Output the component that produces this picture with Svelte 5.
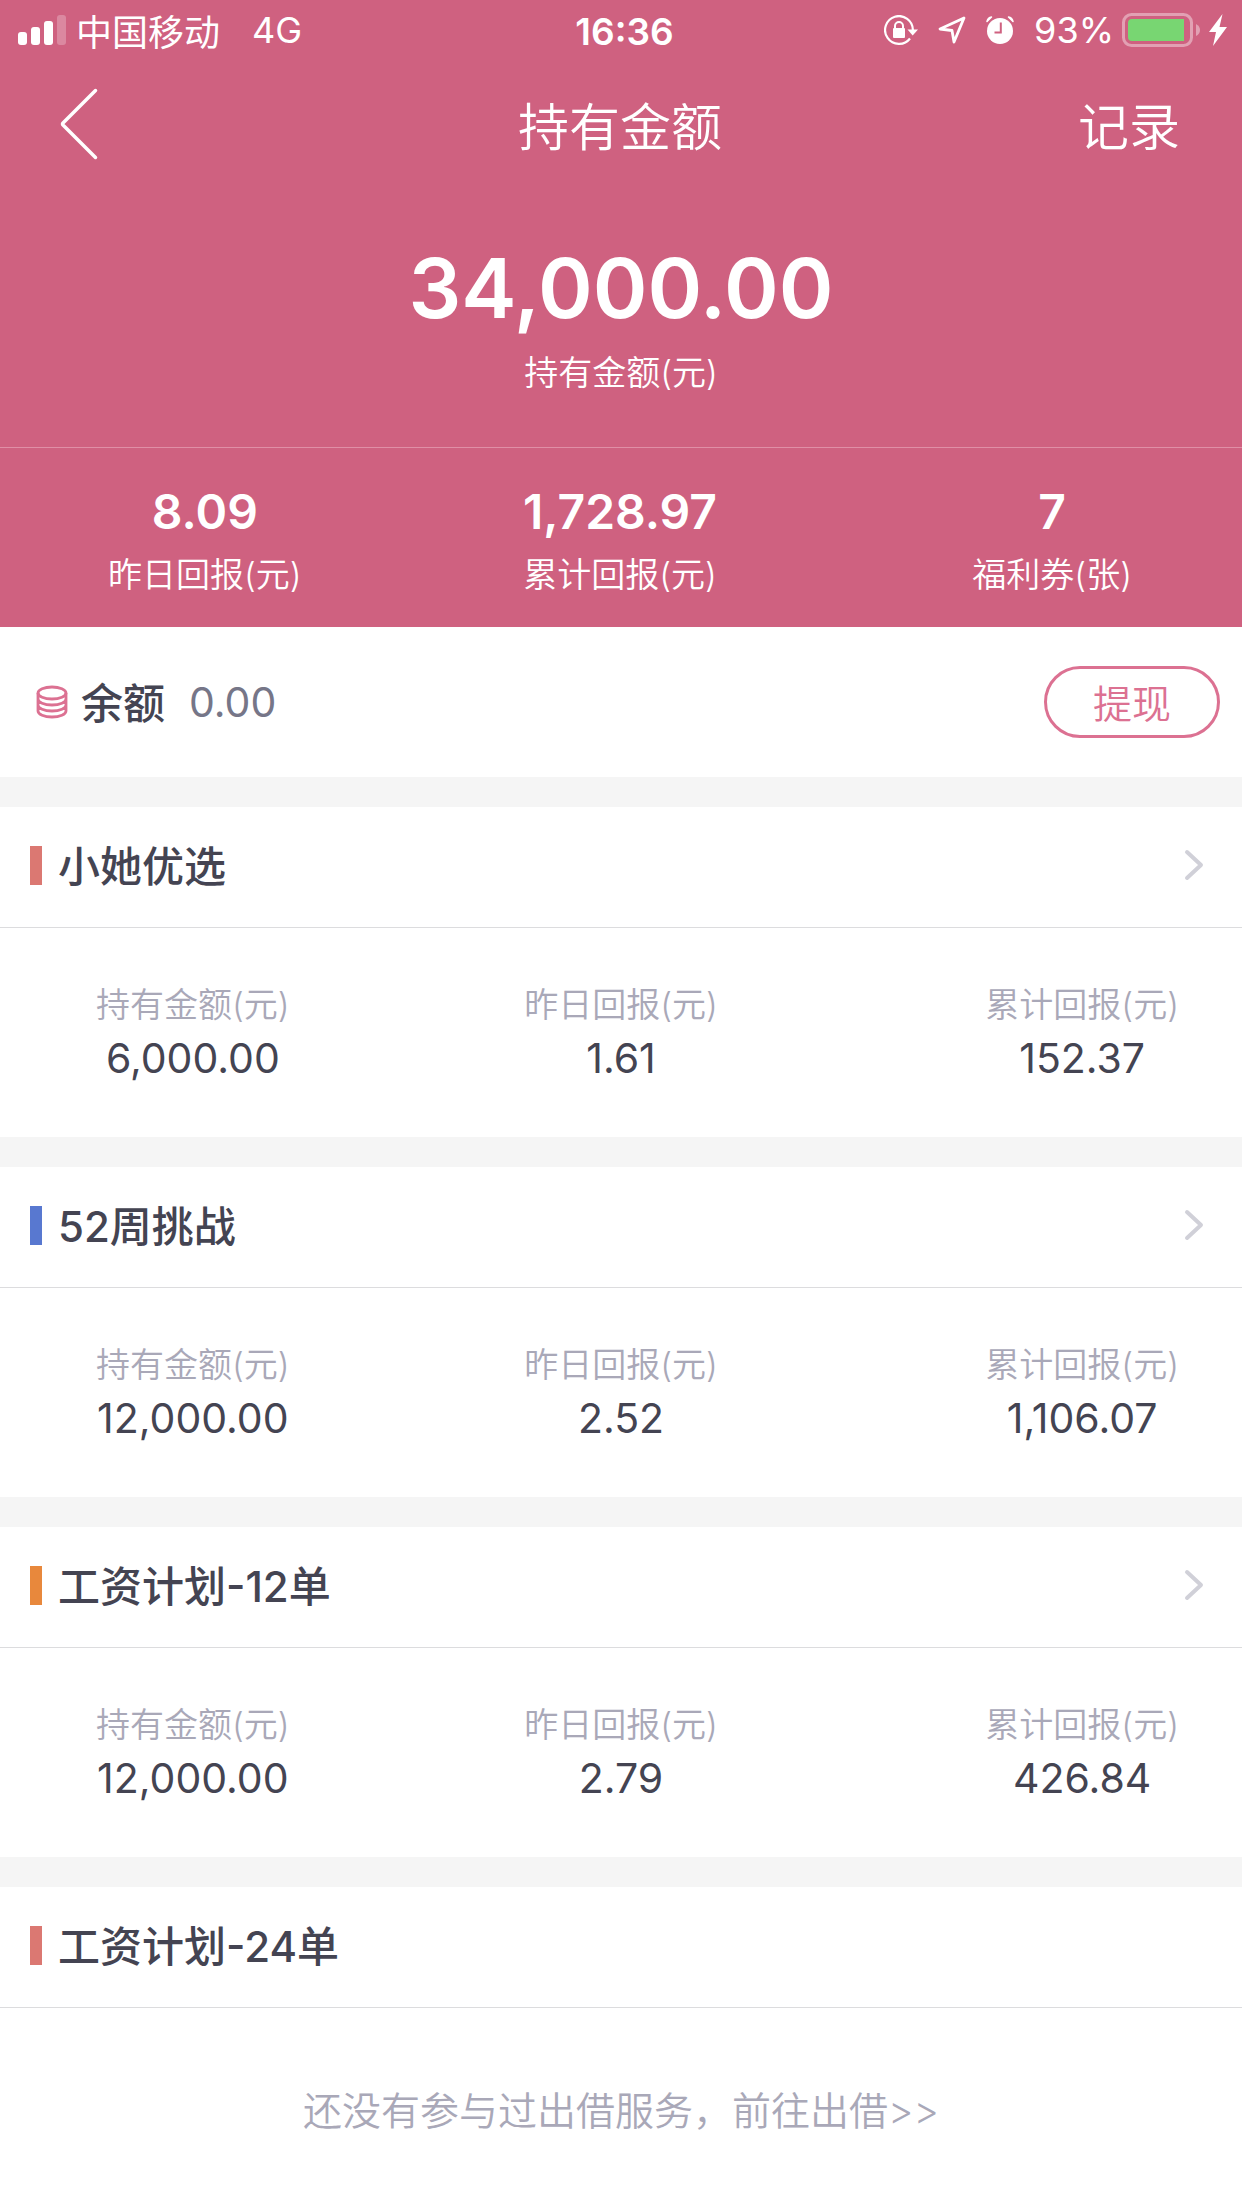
<script lang="ts">
	type Stat = { label: string; value: string };
	type Product = { name: string; color: string; stats: Stat[] };

	const summary: Stat[] = [
		{ label: '昨日回报(元)', value: '8.09' },
		{ label: '累计回报(元)', value: '1,728.97' },
		{ label: '福利券(张)', value: '7' }
	];

	function product(name: string, color: string, values: string[] = []): Product {
		const labels = ['持有金额(元)', '昨日回报(元)', '累计回报(元)'];
		return { name, color, stats: values.map((value, i) => ({ label: labels[i], value })) };
	}

	const products = [
		product('小她优选', 'red', ['6,000.00', '1.61', '152.37']),
		product('52周挑战', 'blue', ['12,000.00', '2.52', '1,106.07']),
		product('工资计划-12单', 'orange', ['12,000.00', '2.79', '426.84']),
		product('工资计划-24单', 'red')
	];
</script>

<header class="hero">
	<div class="status">
		<div class="status-side">
			<svg class="signal" width="48" height="30" viewBox="0 0 48 30" fill="#fff" aria-hidden="true">
				<rect x="0" y="17" width="9" height="13" rx="3" />
				<rect x="13" y="12" width="9" height="18" rx="3" />
				<rect x="26" y="6" width="9" height="24" rx="3" />
				<rect x="39" y="0" width="9" height="30" rx="3" opacity="0.25" />
			</svg>
			<span>中国移动</span>
			<span class="network">4G</span>
		</div>
		<span class="time">16:36</span>
		<div class="status-side right">
			<svg class="lock" width="34" height="30" viewBox="0 0 34 30" fill="none" aria-hidden="true">
				<path d="M26 23.5A13.900 13.900 0 1 1 28.900 15" stroke="#fff" stroke-width="2.200" />
				<path d="M23.500 14.500H34L28.700 20.500Z" fill="#fff" />
				<path d="M11 14V11a4 4 0 0 1 8 0V14" stroke="#fff" stroke-width="2" />
				<rect x="9" y="13" width="12" height="10" rx="1" fill="#fff" />
			</svg>
			<svg class="location" width="28" height="28" viewBox="0 0 28 28" fill="none" aria-hidden="true">
				<path d="M26 2L2 13L14 14.500L16 26Z" stroke="#fff" stroke-width="2.800" stroke-linejoin="round" />
			</svg>
			<svg class="alarm" width="28" height="28" viewBox="0 0 28 28" aria-hidden="true">
				<circle cx="14" cy="15" r="13" fill="#fff" />
				<path d="M1 5.500Q2 1.500 5.500 1Z M27 5.500Q26 1.500 22.500 1Z" fill="#fff" stroke="#fff" stroke-width="1.500" stroke-linejoin="round" />
				<path d="M14.800 6.500V16.500H8.500" fill="none" stroke="#cf6180" stroke-width="2" />
			</svg>
			<span>93%</span>
			<svg class="battery" width="78" height="34" viewBox="0 0 78 34" aria-hidden="true">
				<rect x="1.500" y="1.500" width="68" height="31" rx="8" fill="none" stroke="#fff" stroke-opacity="0.4" stroke-width="3" />
				<path d="M10 6H62V28H10A4 4 0 0 1 6 24V10A4 4 0 0 1 10 6Z" fill="#78d672" />
				<path d="M74 11Q78 13 78 17T74 23Z" fill="#fff" fill-opacity="0.4" />
			</svg>
			<svg class="bolt" width="18" height="32" viewBox="0 0 18 32" aria-hidden="true">
				<path d="M13.500 0L0 18H7L4 32L18 13H10.500Z" fill="#fff" />
			</svg>
		</div>
	</div>

	<nav class="nav">
		<button class="back" aria-label="返回">
			<svg width="38" height="72" viewBox="0 0 38 72" fill="none" aria-hidden="true">
				<path d="M35.500 2.500L3 35Q2 36 3 37L35.500 69.500" stroke="#fff" stroke-width="3.500" stroke-linecap="round" />
			</svg>
		</button>
		<h1>持有金额</h1>
		<a class="history" href="#history">记录</a>
	</nav>

	<div class="total">
		<strong>34,000.00</strong>
		<span>持有金额(元)</span>
	</div>

	<dl class="summary">
		{#each summary as stat}
			<div class="stat">
				<dt>{stat.label}</dt>
				<dd>{stat.value}</dd>
			</div>
		{/each}
	</dl>
</header>

<main>
	<section class="balance">
		<svg width="32" height="34" viewBox="0 0 32 34" fill="none" stroke="#dc7192" stroke-width="2.800" aria-hidden="true">
			<ellipse cx="16" cy="8" rx="14" ry="6" />
			<path d="M2 8V26A14 6 0 0 0 30 26V8M2 14A14 6 0 0 0 30 14M2 20A14 6 0 0 0 30 20" />
		</svg>
		<h2>余额</h2>
		<span class="amount">0.00</span>
		<button class="withdraw">提现</button>
	</section>

	{#each products as item}
		<section class="product">
			<a class="heading" href="#product">
				<span class="mark {item.color}"></span>
				<h2>{item.name}</h2>
				{#if item.stats.length}
					<svg class="arrow" width="20" height="32" viewBox="0 0 20 32" fill="none" aria-hidden="true">
						<path d="M3 3L17 16L3 29" stroke="#d0d0d8" stroke-width="4" stroke-linecap="round" stroke-linejoin="round" />
					</svg>
				{/if}
			</a>
			{#if item.stats.length}
				<dl class="details">
					{#each item.stats as stat}
						<div class="stat">
							<dt>{stat.label}</dt>
							<dd>{stat.value}</dd>
						</div>
					{/each}
				</dl>
			{:else}
				<a class="empty" href="#lend">还没有参与过出借服务，前往出借&gt;&gt;</a>
			{/if}
		</section>
	{/each}
</main>

<style>
	:global(body) {
		margin: 0;
		background: #fff;
		color: #444452;
		font-family: Inter, 'Noto Sans CJK SC', sans-serif;
	}

	h1,
	h2,
	dl,
	dd {
		margin: 0;
	}

	a {
		color: inherit;
		text-decoration: none;
	}

	button {
		padding: 0;
		background: none;
		border: none;
		font-family: inherit;
		cursor: pointer;
	}

	svg {
		flex: none;
		display: block;
	}

	.hero {
		background: #cf6180;
		color: #fff;
	}

	.status {
		display: grid;
		grid-template-columns: 1fr auto 1fr;
		align-items: center;
		height: 60px;
		padding: 0 15px 0 18px;
		font-size: 36px;
		font-weight: 400;
	}

	.status-side {
		display: flex;
		align-items: center;
	}

	.right {
		justify-content: flex-end;
	}

	.signal {
		margin-right: 10px;
	}

	.network {
		margin-left: 32px;
	}

	.time {
		padding: 2px 0 0 4px;
		font-size: 37px;
		font-weight: 600;
	}

	.lock,
	.location,
	.alarm {
		margin-right: 20px;
	}

	.battery {
		margin: 0 9px 0 8px;
	}

	.nav {
		display: grid;
		grid-template-columns: 1fr auto 1fr;
		align-items: center;
		height: 128px;
		padding: 0 62px 4px 60px;
		font-weight: 350;
	}

	.back {
		justify-self: start;
	}

	h1 {
		font-size: 51px;
		font-weight: 350;
	}

	.history {
		justify-self: end;
		font-size: 51px;
	}

	.total {
		display: flex;
		flex-direction: column;
		align-items: center;
		height: 255px;
		border-bottom: 1px solid #e08fa6;
	}

	.total strong {
		margin-top: 40px;
		font-size: 83px;
		font-weight: 600;
		line-height: 112px;
	}

	.total span {
		margin-top: 6px;
		font-size: 34px;
		font-weight: 350;
		line-height: 46px;
	}

	.summary,
	.details {
		display: grid;
		grid-template-columns: repeat(3, 1fr);
	}

	.stat {
		display: flex;
		flex-direction: column;
		align-items: center;
		justify-self: center;
	}

	.stat:first-child {
		justify-self: start;
	}

	.stat:last-child {
		justify-self: end;
	}

	dt {
		font-size: 34px;
		font-weight: 350;
		line-height: 46px;
	}

	.summary {
		height: 179px;
		padding: 0 110px 0 108px;
	}

	.summary .stat {
		flex-direction: column-reverse;
		justify-content: flex-end;
	}

	.summary dd {
		margin: 32px 0 8px;
		font-size: 48px;
		font-weight: 600;
		line-height: 64px;
	}

	.balance {
		display: flex;
		align-items: center;
		height: 150px;
		padding: 0 22px 0 36px;
	}

	h2 {
		padding-bottom: 4px;
		font-size: 42px;
		font-weight: 500;
	}

	.balance h2 {
		margin-left: 13px;
	}

	.amount {
		margin-left: 24px;
		color: #767688;
		font-size: 41px;
	}

	.withdraw {
		box-sizing: border-box;
		width: 176px;
		height: 72px;
		margin-left: auto;
		padding-bottom: 2px;
		border: 3px solid #dc7192;
		border-radius: 36px;
		color: #dc7192;
		font-size: 39px;
		font-weight: 350;
	}

	.product {
		border-top: 30px solid #f5f5f5;
	}

	.heading {
		display: flex;
		align-items: center;
		height: 116px;
		padding: 0 38px 4px 30px;
		border-bottom: 1px solid #dcdcde;
	}

	.mark {
		width: 12px;
		height: 39px;
		margin-right: 16px;
	}

	.red {
		background: #db7872;
	}

	.blue {
		background: #5878d0;
	}

	.orange {
		background: #e8883c;
	}

	.arrow {
		margin-left: auto;
	}

	.details {
		height: 155px;
		padding-top: 54px;
	}

	.details .stat:first-child {
		padding-left: 96px;
	}

	.details .stat:last-child {
		padding-right: 63px;
	}

	.details dt {
		padding-bottom: 2px;
		color: #a9a8b8;
	}

	.details dd {
		font-size: 41px;
		line-height: 56px;
	}

	.empty {
		display: flex;
		align-items: center;
		justify-content: center;
		height: 200px;
		color: #a9a8b8;
		font-size: 39px;
		font-weight: 350;
	}
</style>
